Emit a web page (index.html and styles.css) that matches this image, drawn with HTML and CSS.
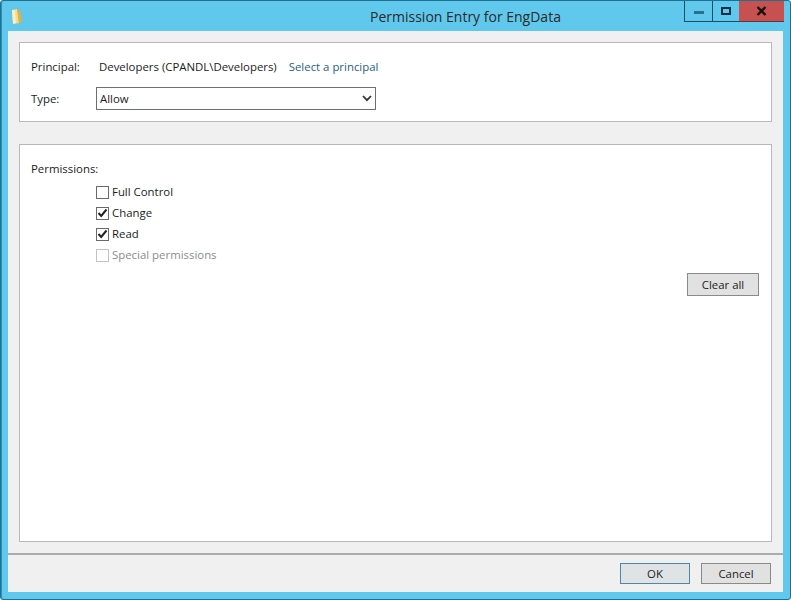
FILE: index.html
```html
<!DOCTYPE html>
<html lang="en">
<head>
<meta charset="utf-8">
<title>Permission Entry for EngData</title>
<link rel="stylesheet" href="styles.css">
</head>
<body>
<div class="window">
  <header class="titlebar">
    <svg class="folder" width="14" height="18" viewBox="0 0 14 18">
      <path d="M2 2 L7 1 L8 4 L9 15 L3 16 Z" fill="#f3dc8c"/>
      <path d="M7 1 L10 3 L12 14 L9 15 Z" fill="#e0b040"/>
      <path d="M2 2 L5 2 L6 15 L3 16 Z" fill="#fbf0c4"/>
    </svg>
    <div class="title">Permission Entry for EngData</div>
    <div class="controls">
      <div class="ctl ctl-min"><span class="min-glyph"></span></div>
      <div class="ctl ctl-max"><span class="max-glyph"></span></div>
      <div class="ctl ctl-close">
        <svg width="11" height="10" viewBox="0 0 11 10"><path d="M1.5 1 L9.5 9 M9.5 1 L1.5 9" stroke="#1a1010" stroke-width="2.4" fill="none"/></svg>
      </div>
    </div>
  </header>
  <div class="client">
    <main class="content">
      <section class="panel panel-top">
        <div class="row row-principal">
          <span class="label">Principal:</span>
          <span class="principal">Developers (CPANDL\Developers)</span>
          <a class="link">Select a principal</a>
        </div>
        <div class="row row-type">
          <span class="label">Type:</span>
          <div class="select">
            <span>Allow</span>
            <svg width="10" height="7" viewBox="0 0 10 7"><path d="M1 1 L5 5.2 L9 1" stroke="#333" stroke-width="1.8" fill="none"/></svg>
          </div>
        </div>
      </section>
      <section class="panel panel-perms">
        <div class="perm-title">Permissions:</div>
        <div class="checks">
          <div class="check"><span class="box"></span><span>Full Control</span></div>
          <div class="check"><span class="box"><svg width="11" height="10" viewBox="0 0 11 10"><path d="M1.5 5 L4.2 8 L9.5 1.5" stroke="#222" stroke-width="2" fill="none"/></svg></span><span>Change</span></div>
          <div class="check"><span class="box"><svg width="11" height="10" viewBox="0 0 11 10"><path d="M1.5 5 L4.2 8 L9.5 1.5" stroke="#222" stroke-width="2" fill="none"/></svg></span><span>Read</span></div>
          <div class="check disabled"><span class="box"></span><span>Special permissions</span></div>
        </div>
        <div class="clear-row"><button class="btn btn-clear">Clear all</button></div>
      </section>
    </main>
    <footer class="footer">
      <button class="btn btn-foot btn-default">OK</button>
      <button class="btn btn-foot">Cancel</button>
    </footer>
  </div>
</div>
</body>
</html>
```
FILE: styles.css
```css
* { box-sizing: border-box; }
html, body { margin: 0; height: 100%; background: #fff; }
body { font-family: "Open Sans", "Noto Sans", sans-serif; font-size: 11.4px; color: #1c1c1c; }
.window {
  width: 791px; height: 600px; display: flex; flex-direction: column;
  background: #5fc8ec; border: 1px solid #1f6f8f; border-radius: 3px;
  padding: 0 7px 7px 7px; box-shadow: inset 1px 0 0 #2b93bb;
}
.titlebar { height: 30px; display: flex; align-items: flex-start; flex: none; position: relative; }
.folder { margin: 7px 0 0 2px; flex: none; }
.title { flex: 1; padding: 7px 0 0 346px; font-size: 14px; line-height: 18px; color: #2a2a2a; white-space: nowrap; }
.controls { display: flex; height: 21px; margin-right: -1px; flex: none; }
.ctl { height: 21px; display: flex; align-items: center; justify-content: center; border-bottom: 1px solid #15506a; }
.ctl-min { width: 28px; border-left: 1px solid #15506a; }
.ctl-max { width: 27px; border-left: 1px solid #15506a; }
.ctl-close { width: 45px; background: #c75050; border-bottom-color: #6b3030; }
.min-glyph { width: 10px; height: 3px; background: #2a6f90; margin-top: 3px; }
.max-glyph { width: 10px; height: 8px; border: 2px solid #0d2f44; margin-top: -1px; }
.client { flex: 1; background: #f0f0f0; display: flex; flex-direction: column; min-height: 0; }
.content { flex: 1; padding: 11px 11px 0 11px; display: flex; flex-direction: column; gap: 22px; min-height: 0; }
.panel { background: #fff; border: 1px solid #b8b8b8; }
.panel-top { height: 80px; padding: 13px 11px 0 11px; }
.panel-perms { flex: 1; padding: 17px 12px 0 11px; display: flex; flex-direction: column; }
.row { display: flex; align-items: center; }
.row-principal { height: 20px; }
.row-type { height: 23px; margin-top: 11px; }
.label { width: 65px; flex: none; }
.principal { margin-left: 3px; }
.link { margin-left: 12px; color: #1f5f86; }
.select {
  width: 280px; height: 23px; border: 1px solid #6e6e6e; background: #fff;
  display: flex; align-items: center; justify-content: space-between; padding: 0 3px 0 3px;
}
.perm-title { line-height: 14px; }
.checks { margin: 9px 0 0 65px; display: flex; flex-direction: column; gap: 7px; }
.check { display: flex; align-items: center; gap: 3px; height: 14px; line-height: 14px; }
.box { width: 13px; height: 13px; border: 1px solid #6a6a6a; background: #fff; display: flex; align-items: center; justify-content: center; flex: none; }
.disabled { color: #8c8c8c; }
.disabled .box { border-color: #c4c4c4; }
.clear-row { display: flex; justify-content: flex-end; margin-top: 11px; }
.btn { font: inherit; color: #1c1c1c; background: #e1e1e1; border: 1px solid #8a8a8a; padding: 0; }
.btn-clear { width: 72px; height: 23px; }
.footer { flex: none; height: 39px; margin-top: 11px; border-top: 2px solid #ababab; display: flex; justify-content: flex-end; gap: 11px; padding: 8px 12px 0 0; }
.btn-foot { width: 70px; height: 21px; }
.btn-default { border-color: #4a88a8; background: #dfe3e6; }
```
